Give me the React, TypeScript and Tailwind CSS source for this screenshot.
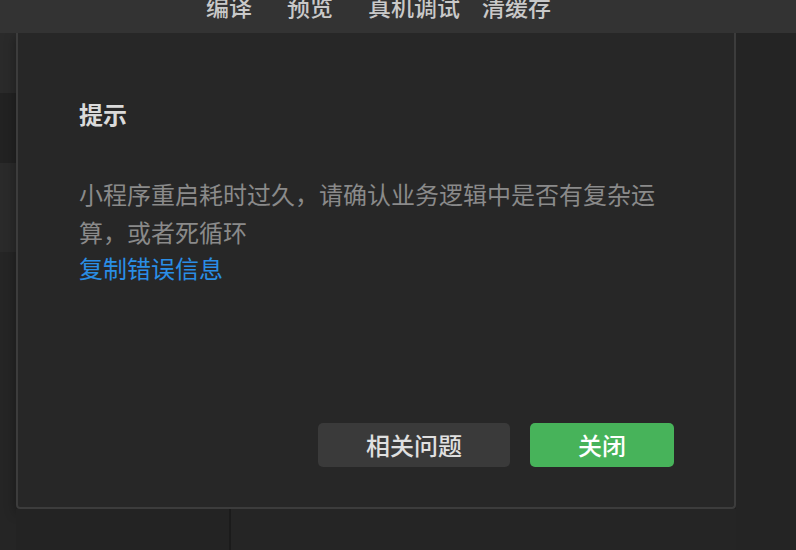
import React from "react";

export default function App() {
  const font = { fontFamily: '"Noto Sans CJK SC", "Noto Sans", sans-serif' };
  return (
    <div
      className="w-[796px] h-[550px] bg-[#232323] overflow-hidden flex flex-col"
      style={font}
    >
      {/* Top toolbar */}
      <div className="h-[33px] shrink-0 bg-[#333333] overflow-hidden relative">
        <div className="flex items-start mt-[-5px] pl-[206px] text-[23px] leading-[23px] font-medium text-[#c9c9c9] whitespace-nowrap">
          <span>编译</span>
          <span className="ml-[35px]">预览</span>
          <span className="ml-[35px]">真机调试</span>
          <span className="ml-[22px]">清缓存</span>
        </div>
      </div>

      <div className="flex flex-1 min-h-0">
        {/* Left strip */}
        <div className="w-[16px] shrink-0 flex flex-col">
          <div className="h-[60px] bg-[#2a2a2a]" />
          <div className="h-[70px] bg-[#222222]" />
          <div className="h-[89px] bg-[#2a2a2a]" />
          <div className="flex-1 bg-[#252525]" />
        </div>

        <div className="flex flex-col w-[720px] shrink-0">
          {/* Dialog */}
          <div className="h-[476px] shrink-0 bg-[#272727] border-l-2 border-r-2 border-b-2 border-[#3c3c3c] rounded-b-[4px] shadow-[0_4px_12px_rgba(0,0,0,0.35)] flex flex-col pl-[61px] pr-[60px] pt-[69px] pb-[40px]">
            <div className="text-[24px] leading-[24px] font-semibold text-[#dadada]">
              提示
            </div>
            <p className="mt-[49px] text-[24px] leading-[38px] text-[#8a8a8a]">
              小程序重启耗时过久，请确认业务逻辑中是否有复杂运算，或者死循环
            </p>
            <div className="text-[24px] leading-[34px] text-[#2a8ee6]">
              复制错误信息
            </div>
            <div className="mt-auto flex justify-end gap-[20px]">
              <div className="w-[192px] h-[44px] rounded-[5px] bg-[#3a3a3a] flex items-center justify-center text-[24px] font-medium text-[#e0e0e0]">
                相关问题
              </div>
              <div className="w-[144px] h-[44px] rounded-[5px] bg-[#47b35a] flex items-center justify-center text-[24px] font-medium text-white">
                关闭
              </div>
            </div>
          </div>
          {/* Below dialog */}
          <div className="flex flex-1">
            <div className="w-[213px] bg-[#232323]" />
            <div className="w-[2px] bg-[#1b1b1b]" />
            <div className="flex-1 bg-[#252525]" />
          </div>
        </div>

        {/* Right area */}
        <div className="flex-1 bg-[#242424]" />
      </div>
    </div>
  );
}
